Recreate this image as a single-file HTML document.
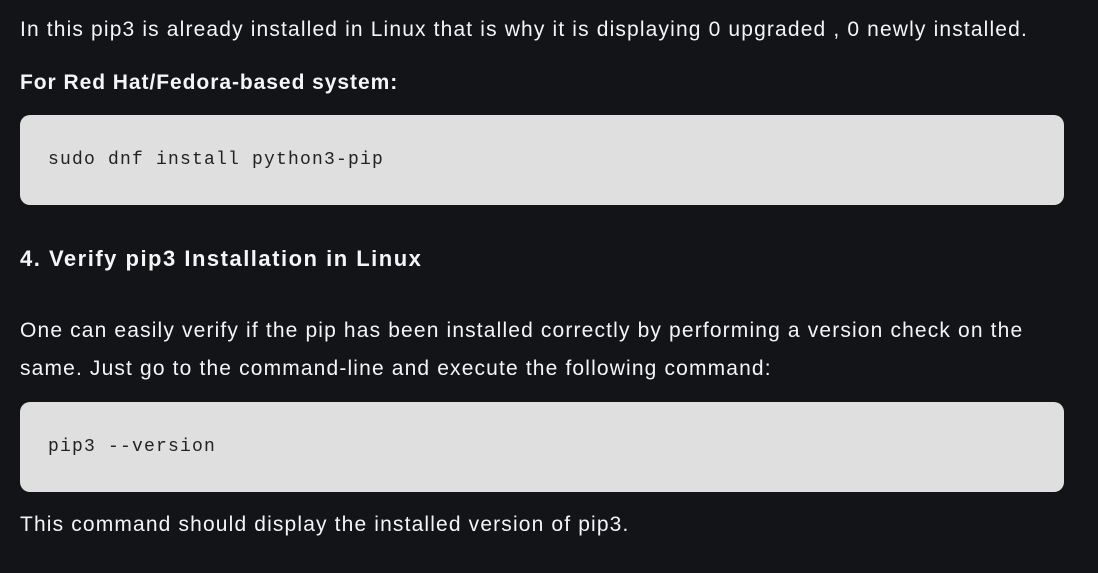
<!DOCTYPE html>
<html><head><style>
body{margin:0;width:1098px;height:573px;background:#131417;color:#f5f5f5;font-family:"Liberation Sans",sans-serif;position:relative;overflow:hidden}
.t{position:absolute;left:20px;font-size:21px;line-height:28px;white-space:nowrap;letter-spacing:1.15px}
.b{font-weight:bold;letter-spacing:0.95px}
.code{position:absolute;left:20px;width:1044px;height:90px;background:#dfdfdf;border-radius:10px;color:#222;font-family:"Liberation Mono",monospace;font-size:18px;letter-spacing:1.2px}
.code span{position:absolute;left:28px;top:33px;line-height:24px}
</style></head><body>
<div class="t" style="top:16px">In this pip3 is already installed in Linux that is why it is displaying 0 upgraded , 0 newly installed.</div>
<div class="t b" style="top:69px">For Red Hat/Fedora-based system:</div>
<div class="code" style="top:115px"><span>sudo dnf install python3-pip</span></div>
<div class="t b" style="top:245px;font-size:22px;letter-spacing:1.5px">4. Verify pip3 Installation in Linux</div>
<div class="t" style="top:317px">One can easily verify if the pip has been installed correctly by performing a version check on the</div>
<div class="t" style="top:355px">same. Just go to the command-line and execute the following command:</div>
<div class="code" style="top:402px"><span>pip3 --version</span></div>
<div class="t" style="top:511px">This command should display the installed version of pip3.</div>
</body></html>
